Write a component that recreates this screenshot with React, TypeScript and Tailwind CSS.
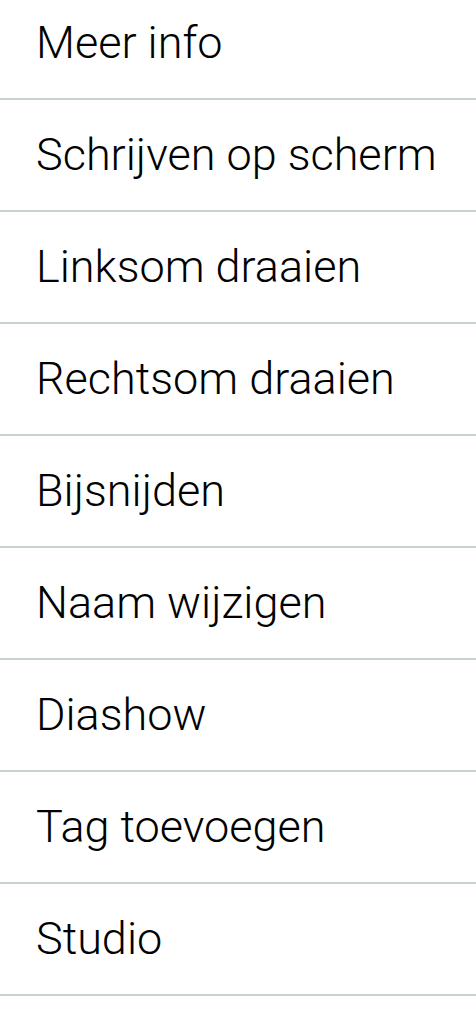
const items = [
  'Meer info',
  'Schrijven op scherm',
  'Linksom draaien',
  'Rechtsom draaien',
  'Bijsnijden',
  'Naam wijzigen',
  'Diashow',
  'Tag toevoegen',
  'Studio',
];

export default function App() {
  return (
    <div className="h-[1024px] w-[476px] overflow-hidden bg-white">
      <ul className="-mt-[12px]">
        {items.map((label) => (
          <li
            key={label}
            className="flex h-[112px] items-center border-b-2 border-[#cad1d1] pl-[36px] text-[45px] font-light text-black"
            style={{ fontFamily: 'Roboto, sans-serif' }}
          >
            {label}
          </li>
        ))}
      </ul>
    </div>
  );
}
